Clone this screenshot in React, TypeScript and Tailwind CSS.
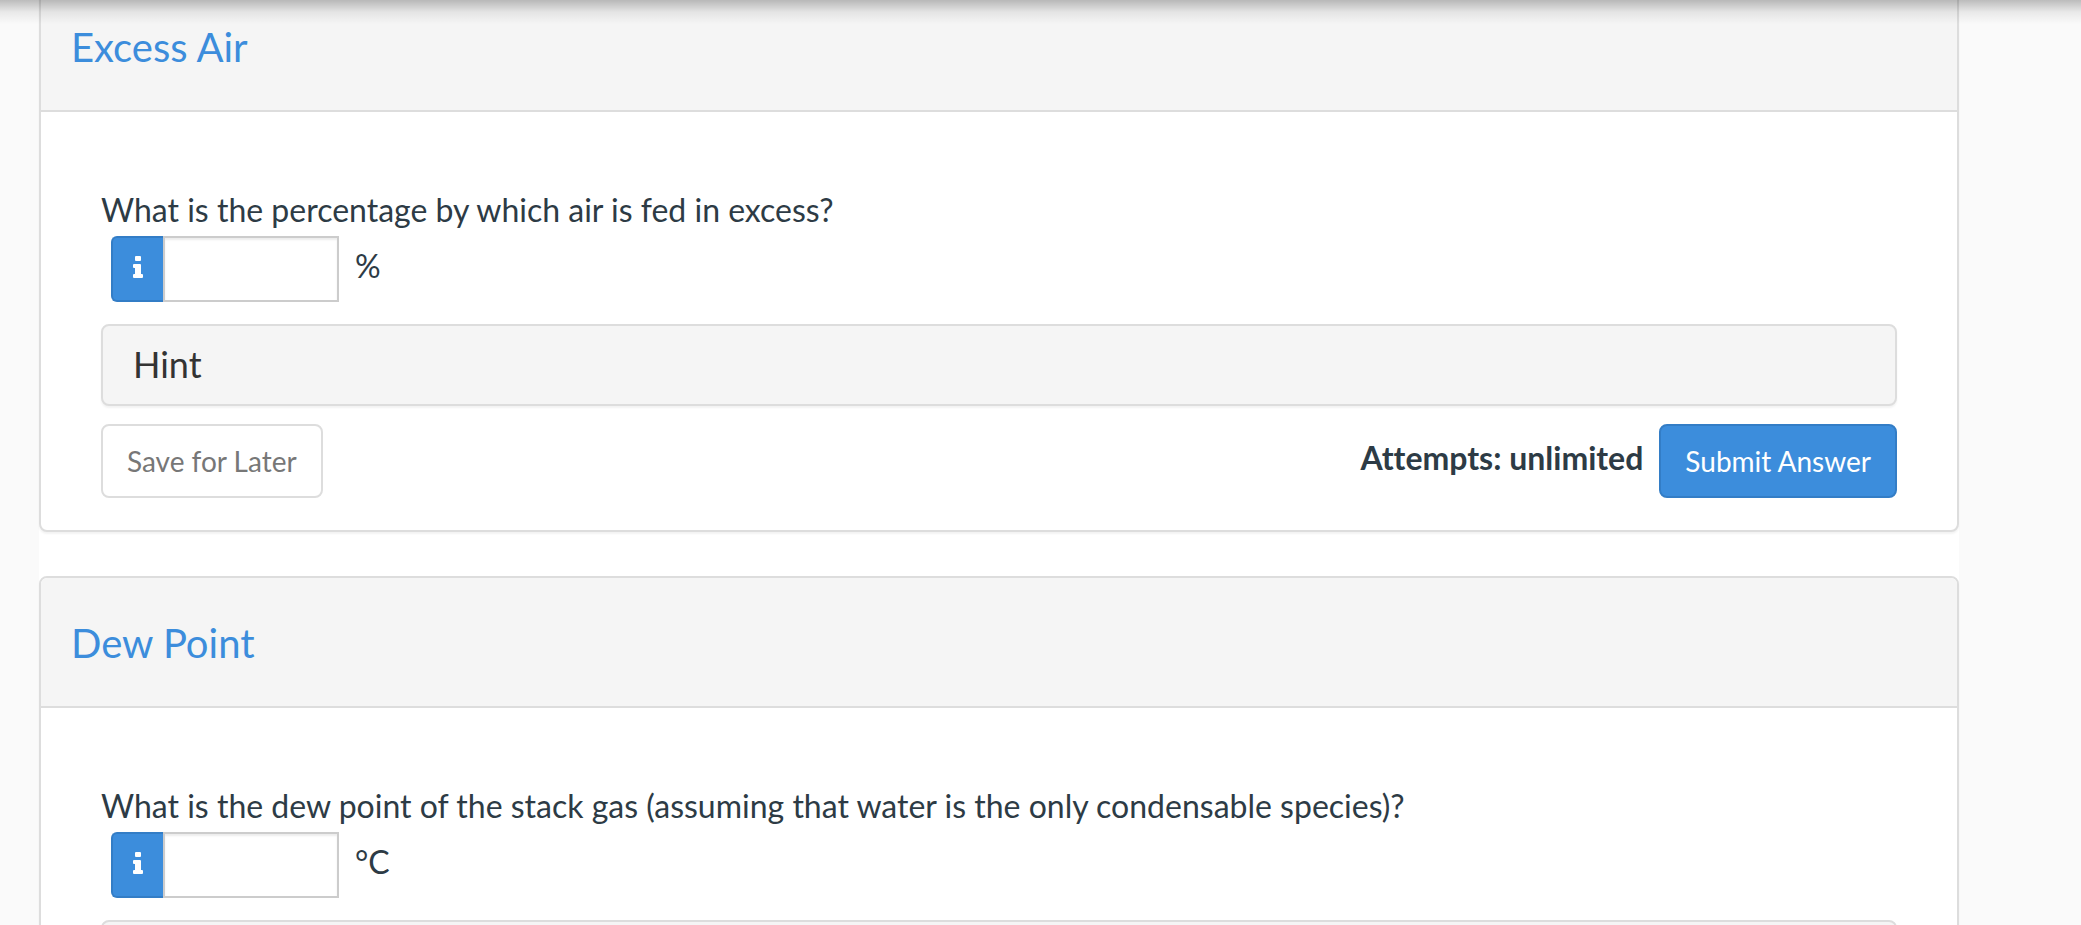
import React from 'react'

const questions = [
  {
    id: 'excess-air',
    title: 'Excess Air',
    question: 'What is the percentage by which air is fed in excess?',
    unit: '%',
    hint: 'Hint',
    attempts: 'unlimited',
  },
  {
    id: 'dew-point',
    title: 'Dew Point',
    question:
      'What is the dew point of the stack gas (assuming that water is the only condensable species)?',
    unit: '°C',
  },
]

const InfoIcon = () => {
  return (
    <svg width="10" height="22" viewBox="0 0 10 22" fill="currentColor" aria-hidden="true">
      <rect x="2" y="0" width="6" height="5" rx="1" />
      <path d="M1 8H7Q8 8 8 9V18H9Q10 18 10 19V21Q10 22 9 22H1Q0 22 0 21V19Q0 18 1 18H2V12H1Q0 12 0 11V9Q0 8 1 8Z" />
    </svg>
  )
}

type QuestionProps = {
  id: string
  title: string
  question: string
  unit: string
  hint?: string
  attempts?: string
}

const QuestionPanel = ({ id, title, question, unit, hint, attempts }: QuestionProps) => {
  return (
    <section className="rounded-lg border-2 border-[#dddddd] bg-white shadow-[0_2px_2px_rgba(0,0,0,0.05)]">
      <div className="rounded-t-md border-b-2 border-[#dddddd] bg-[#f5f5f5] px-[30px] pt-[41px] pb-[39px]">
        <h2 className="text-[40px] leading-[48px] text-[#3c8ddc]">
          <a href={'#' + id}>{title}</a>
        </h2>
      </div>
      <div className="px-[60px] pt-[74px] pb-8">
        <label htmlFor={id} className="mb-[2px] block text-[32px] leading-[48px]">
          {question}
        </label>
        <div className="flex items-start pl-[10px]">
          <button
            type="button"
            aria-label="Input help"
            className="flex h-[66px] w-[52px] items-center justify-center rounded-l-md border-2 border-r-0 border-[#337dc6] bg-[#3c8ddc] pb-1 text-white"
          >
            <InfoIcon />
          </button>
          <input
            id={id}
            type="text"
            className="h-[66px] w-44 border-2 border-[#cccccc] bg-white px-3 text-[28px] shadow-[inset_0_2px_2px_rgba(0,0,0,0.075)]"
          />
          <span className="ml-4 text-[32px] leading-[60px]">{unit}</span>
        </div>
        <button
          type="button"
          aria-label="Hint"
          className="mt-[22px] block min-h-[82px] w-full rounded-lg border-2 border-[#dddddd] bg-[#f5f5f5] px-[30px] pt-[17px] pb-[19px] text-left text-[36px] leading-[42px] text-[#333333] shadow-[0_2px_2px_rgba(0,0,0,0.05)]"
        >
          {hint}
        </button>
        {attempts && (
          <div className="mt-[18px] flex items-start justify-between">
            <button
              type="button"
              className="rounded-lg border-2 border-[#dddddd] bg-white px-6 py-[15px] text-[28px] leading-[40px] text-[#777777]"
            >
              Save for Later
            </button>
            <div className="flex items-start gap-4">
              <span className="text-[32px] leading-[68px] font-bold">Attempts: {attempts}</span>
              <button
                type="button"
                className="rounded-lg border-2 border-[#337dc6] bg-[#3c8ddc] px-6 py-[15px] text-[28px] leading-[40px] text-white"
              >
                Submit Answer
              </button>
            </div>
          </div>
        )}
      </div>
    </section>
  )
}

const App = () => {
  return (
    <div className="relative h-screen overflow-hidden bg-[#fafafa] pr-[122px] pl-[39px] font-['Lato',sans-serif] text-[#2d3b45] [font-variant-ligatures:none]">
      <main className="-mt-5 flex flex-col gap-11 bg-white">
        {questions.map((item) => (
          <QuestionPanel key={item.id} {...item} />
        ))}
      </main>
      {/* shadow of the bar above the scrolled content */}
      <div className="pointer-events-none absolute inset-x-0 top-0 h-6 bg-linear-to-b from-black/25 via-black/7 to-transparent" />
    </div>
  )
}

export default App
